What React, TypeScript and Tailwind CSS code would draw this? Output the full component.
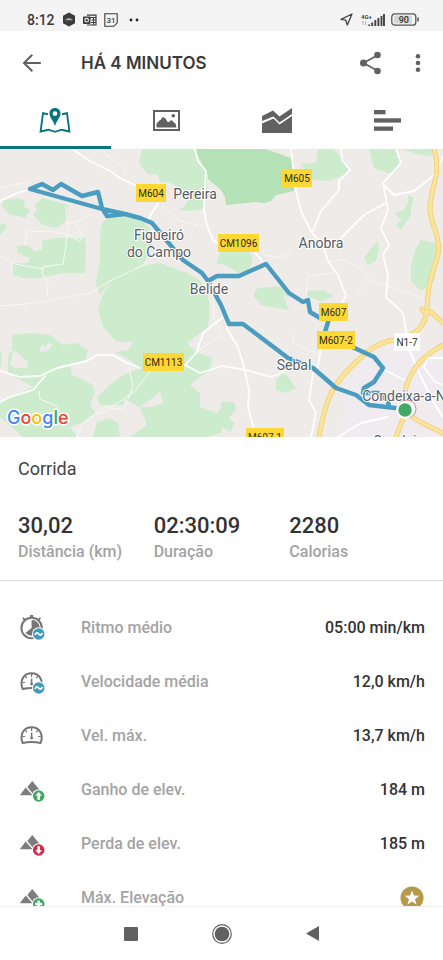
import type { ReactNode } from 'react';

const FOREST = '#b5e1b6';
const GREEN = '#cdecce';
const LAND = '#eeebe8';

const greens = [
  '142,0 139,14 147,25 158,26 160,33 171,34 183,41 190,47 185,57 179,61 190,62 203,60 206,52 207,33 207,20 196,5 193,0',
  '318,0 316,14 301,15 312,31 328,32 344,26 349,21 344,11 333,0',
  '369,0 374,19 388,24 394,24 399,14 398,0',
  '401,0 421,6 432,7 432,0',
  '408,46 414,49 411,59 411,66 404,76 401,81 396,76 401,71 394,64 404,61 408,54',
  '421,91 438,94 439,109 434,132 421,142 411,132 411,116 416,99',
  '378,92 379,99 376,112 368,116 364,109 371,99',
  '221,101 248,102 253,109 249,121 238,124 228,117 216,114',
  '254,144 258,139 284,137 289,148 283,146 289,161 271,158 261,156 254,148',
  '308,142 324,141 333,147 321,153 306,146',
  '284,223 289,229 296,239 286,244 276,241 276,231',
  '221,253 234,253 236,261 229,269 234,274 231,283 221,278',
  '102,74 110,66 127,67 140,71 150,79 152,97 143,116 127,124 110,132 100,146 97,139 96,132 100,112 100,86',
  '102,148 110,132 127,124 147,116 160,114 187,124 200,131 208,146 210,161 208,178 187,194 197,204 212,208 210,221 190,236 200,244 200,258 217,264 222,258 222,284 206,288 130,288 147,276 140,258 153,258 163,254 160,243 140,258 124,250 124,256 100,256 97,248 107,238 123,226 140,219 127,209 115,203 128,201 133,193 117,193 103,178 98,161',
  '3,51 17,49 25,52 24,57 30,61 25,69 17,67 10,66 2,57',
  '35,56 42,49 50,51 68,56 68,69 58,79 43,76 33,66 37,62',
  '0,76 5,74 7,79 0,86',
  '42,92 55,89 85,89 86,99 85,124 63,124 38,129 23,129 13,126 13,114 28,114 30,109 17,104 17,97 27,96 35,102 42,101',
  '12,186 30,184 50,186 63,196 77,194 88,201 85,211 70,216 72,226 80,229 93,236 95,244 90,254 95,264 83,273 70,278 77,288 23,288 0,268 0,253 20,244 33,238 17,229 8,223 8,208 12,201',
  '97,273 110,269 118,274 120,288 93,288',
  '0,199 2,208 0,221',
];

const clearings = [
  '13,201 20,206 28,213 27,219 15,219 10,216',
  '40,198 43,195 46,198 49,193 53,196 47,202 40,203',
];

const roads = [
  'M0 52 17 44 32 40',
  'M72 0 90 12 110 22 120 29 137 37',
  'M195 0 198 12 206 22 205 36 204 62 207 76 213 91 220 96',
  'M158 54 148 71',
  'M0 222 20 228 40 227 57 219 87 212 97 206 113 206 125 213 140 219',
  'M45 227 33 241 10 248 0 253',
  'M222 169 203 184 197 203 185 216 200 224 222 217 246 221 271 228 284 223',
  'M226 178 238 198 244 218 249 241 248 258 254 280',
  'M291 0 296 42 301 62 311 82 324 99 328 112 338 126 346 147 334 168',
  'M341 0 342 11 350 21 339 32 339 41 321 62 313 82',
  'M396 0 401 14 383 34 388 61 381 79 389 96 383 106 388 126 386 149 389 151 403 164 409 201 421 228 434 254 443 268',
  'M384 36 394 46 414 42 433 27 443 8',
  'M386 54 364 66 341 89',
  'M254 102 262 112',
  'M381 219 404 231',
  'M338 288 361 274 388 268',
  'M313 224 309 251 316 264 311 288',
  'M318 218 321 198 324 184',
  'M443 209 428 209 424 218 434 232 443 236',
];

const lanes = [
  'M0 39 13 36 30 33',
  'M100 0 127 22 123 27',
  'M162 57 180 72 203 77',
  'M66 57 68 75 78 72 90 65',
  'M26 96 26 83 50 82 68 86 80 92 82 86 78 78',
  'M68 75 66 96 63 115 43 118 42 124 48 135 47 147',
  'M0 108 15 115 43 120',
  'M0 157 25 155 48 152 90 144 110 132 127 124 147 114',
  'M128 215 133 237 124 260 110 260 95 265 82 275 77 288',
  'M152 220 135 242 115 256 100 260',
  'M39 242 40 250 58 258',
  'M264 106 281 109 291 102',
  'M329 112 344 111 361 119 371 132 354 146',
  'M306 147 308 127 334 124',
  'M371 131 401 142 421 148',
  'M294 183 293 194 305 199 318 205',
  'M213 150 214 170 222 184',
  'M197 203 212 192 222 187',
];

const highways = [
  'M434 0C437 12 438 18 435 32C428 58 429 64 434 78C440 95 440 102 435 116C430 130 428 138 427 161C425 178 416 187 394 191C376 193 364 205 348 221C330 240 325 254 319 288',
  'M422 160Q424 166 431 163L443 174',
  'M443 196C421 208 410 221 405 242L406 262 396 288',
  'M406 264 422 274 443 284',
];

const route = [
  'M125 65 107 67 102 59 98 43 82 47 61 35 53 41 42 35 30 40 102 60 125 65 140 69 152 74 167 92 183 111 202 124 208 132 221 156 229 175 243 175 288 209 313 219 336 239 356 246 369 256 404 260',
  'M208 132 217 127 239 127 266 115 289 144 303 153 308 151 310 163 320 169 329 170 325 183 330 191 348 196 374 208 383 219 374 233 364 239 363 244 378 244 388 252 389 258',
];

const roadSigns = [
  { x: 136, y: 35, w: 30, text: 'M604' },
  { x: 282, y: 20, w: 30, text: 'M605' },
  { x: 218, y: 85, w: 41, text: 'CM1096' },
  { x: 319, y: 154, w: 29, text: 'M607' },
  { x: 317, y: 182, w: 38, text: 'M607-2' },
  { x: 394, y: 184, w: 26, text: 'N1-7', plain: true },
  { x: 143, y: 204, w: 41, text: 'CM1113' },
  { x: 246, y: 279, w: 38, text: 'M607-1' },
];

const towns = [
  { x: 195, y: 50, text: 'Pereira' },
  { x: 159, y: 91, text: 'Figueiró' },
  { x: 159, y: 108, text: 'do Campo' },
  { x: 209, y: 145, text: 'Belide' },
  { x: 321, y: 99, text: 'Anobra' },
  { x: 294, y: 221, text: 'Sebal' },
  { x: 415, y: 252, text: 'Condeixa-a-Nova' },
  { x: 402, y: 297, text: 'Condeixa' },
];

function RouteMap() {
  return (
    <svg
      viewBox="0 0 443 288"
      preserveAspectRatio="xMidYMid slice"
      className="block h-72 w-full shrink-0"
      role="img"
      aria-label="Mapa do percurso"
      fontFamily="Roboto, sans-serif"
    >
      <rect width="443" height="288" fill={LAND} />
      <path d="M345 235 372 200 394 195 425 200 443 205V288H340Z" fill="#efebef" />
      {greens.map((points) => (
        <polygon key={points} points={points} fill={GREEN} />
      ))}
      <polygon
        points="194,0 207,23 208,30 221,41 225,48 226,56 256,53 264,54 271,52 276,46 294,42 293,19 291,9 280,5 271,2 265,0"
        fill={FOREST}
      />
      {clearings.map((points) => (
        <polygon key={points} points={points} fill={LAND} />
      ))}
      <g fill="none" strokeLinejoin="round" strokeLinecap="round">
        {lanes.map((d) => (
          <path key={d} d={d} stroke="#f9f8f6" strokeWidth="1" />
        ))}
        {roads.map((d) => (
          <path key={d} d={d} stroke="#fff" strokeWidth="1.8" />
        ))}
        {highways.map((d) => (
          <path key={d} d={d} stroke="#efcf73" strokeWidth="5" />
        ))}
        {highways.map((d) => (
          <path key={d} d={d} stroke="#fce39a" strokeWidth="3.4" />
        ))}
        {route.map((d) => (
          <path key={d} d={d} stroke="#4a9cc0" strokeWidth="4.4" />
        ))}
      </g>
      {roadSigns.map((sign) => (
        <g key={sign.text}>
          <rect x={sign.x} y={sign.y} width={sign.w} height="18" fill={sign.plain ? '#fff' : '#fcd834'} />
          <text x={sign.x + sign.w / 2} y={sign.y + 13} fontSize="10" textAnchor="middle" fill="#2f2c20">
            {sign.text}
          </text>
        </g>
      ))}
      <g fontSize="14" textAnchor="middle" fill="#565c66" stroke="#fff" strokeWidth="2" strokeLinejoin="round" paintOrder="stroke">
        {towns.map((town) => (
          <text key={town.text} x={town.x} y={town.y}>
            {town.text}
          </text>
        ))}
      </g>
      <circle cx="407" cy="260" r="9" fill="#fff" stroke="#c98f8f" strokeWidth="1" />
      <circle cx="405" cy="261" r="9" fill="#fff" />
      <circle cx="405" cy="261" r="6.7" fill="#42a862" />
      <text
        x="7"
        y="275"
        fontSize="18"
        fontWeight="500"
        fontFamily="Inter, sans-serif"
        stroke="#fff"
        strokeWidth="3"
        strokeLinejoin="round"
        paintOrder="stroke"
      >
        <tspan fill="#4285f4">G</tspan>
        <tspan fill="#ea4335">o</tspan>
        <tspan fill="#fbbc05">o</tspan>
        <tspan fill="#4285f4">g</tspan>
        <tspan fill="#34a853">l</tspan>
        <tspan fill="#ea4335">e</tspan>
      </text>
    </svg>
  );
}

function StatusBar() {
  return (
    <div className="flex h-[31px] shrink-0 items-center justify-between bg-[#f4f4f4] pr-6 pl-[27px] pt-2 text-[#3c3c3c]">
      <div className="flex items-center gap-[7px]">
        <span className="text-[14px] leading-4 font-medium">8:12</span>
        <svg className="h-[15px] w-[14px]" viewBox="0 0 14 15">
          <path d="M7 .5 13 3.8V11.2L7 14.5 1 11.2V3.8Z" fill="#3c3c3c" />
          <path d="M3 8.3C4 6.8 5.5 6.2 7 6.2S10 6.8 11 8.3Z" fill="#aaa" />
        </svg>
        <svg className="h-3 w-[14px]" viewBox="0 0 14 12">
          <path d="M4 1.2H13V11H4" fill="none" stroke="#3c3c3c" strokeWidth="1.2" />
          <path d="M4 3.5H13M8.5 6H13M10.5 3V11M8 8.5H13" stroke="#3c3c3c" strokeWidth="1" />
          <rect x="0" y="2.5" width="7.5" height="7.5" rx=".8" fill="#3c3c3c" />
          <circle cx="3.7" cy="6.2" r="1.8" fill="none" stroke="#f4f4f4" strokeWidth="1.1" />
        </svg>
        <svg className="h-[14px] w-[14px]" viewBox="0 0 14 14" fontFamily="Roboto, sans-serif">
          <path d="M.8 .7H13.2V9.8L9.8 13.3H.8Z" fill="none" stroke="#3c3c3c" strokeWidth="1.1" />
          <text x="7" y="10" fontSize="8" fontWeight="500" textAnchor="middle" fill="#3c3c3c">31</text>
        </svg>
        <svg className="ml-1 h-1 w-3" viewBox="0 0 12 4">
          <circle cx="2" cy="2" r="1.4" fill="#222" />
          <circle cx="8" cy="2" r="1.4" fill="#222" />
        </svg>
      </div>
      <div className="flex items-center">
        <svg className="mr-2 h-[13px] w-[13px]" viewBox="0 0 13 13">
          <path d="M12 1 1 6.3 5.8 7.2 7.3 12Z" fill="none" stroke="#444" strokeWidth="1.3" strokeLinejoin="round" />
        </svg>
        <svg className="mr-[6px] h-[14px] w-6" viewBox="0 0 24 14" fontFamily="Roboto, sans-serif">
          <text x="0" y="5.5" fontSize="6" fontWeight="700" fill="#444">4G+</text>
          <path d="M2 8V12M1 9 2 8M4.5 8V12M5.5 11 4.5 12" stroke="#aaa" strokeWidth=".8" fill="none" />
          <path d="M8.2 13V11.5M11.2 13V9.5M14.3 13V7M17.4 13V5M20.5 13V3M23 13V1" stroke="#444" strokeWidth="1.9" />
        </svg>
        <svg className="h-[13px] w-7" viewBox="0 0 28 13" fontFamily="Roboto, sans-serif">
          <rect x="3" y="2.5" width="18" height="8" rx="1" fill="#d6d6d6" />
          <rect x=".8" y=".8" width="24" height="11.4" rx="3" fill="none" stroke="#555" strokeWidth="1.3" />
          <path d="M27 4.5V8.5" stroke="#555" strokeWidth="1.5" />
          <text x="12.8" y="9.8" fontSize="9" fontWeight="500" textAnchor="middle" fill="#333">90</text>
        </svg>
      </div>
    </div>
  );
}

function Header() {
  return (
    <header className="flex h-16 shrink-0 items-center pr-[15px] pl-5">
      <button type="button" aria-label="Voltar" className="mr-10 flex h-6 w-[21px] items-center">
        <svg className="h-5 w-[21px]" viewBox="0 0 21 20" fill="none" stroke="#616161" strokeWidth="2">
          <path d="M20.8 10H4M12.3 1.8 4 10 12.3 18.2" />
        </svg>
      </button>
      <h1 className="font-[Inter,sans-serif] text-[17px] leading-6 font-semibold text-[#3a3a3a]">HÁ 4 MINUTOS</h1>
      <button type="button" aria-label="Partilhar" className="ml-auto">
        <svg className="h-6 w-6" viewBox="0 0 24 24" fill="#616161">
          <path d="M4.5 12 19 4M4.5 12 19 20" stroke="#616161" strokeWidth="1.8" />
          <circle cx="4.5" cy="12" r="3.5" />
          <circle cx="18.5" cy="4" r="3.3" />
          <circle cx="18.500" cy="20" r="3.3" />
        </svg>
      </button>
      <button type="button" aria-label="Mais opções" className="ml-[25px] flex w-5 justify-center">
        <svg className="h-5 w-1.5" viewBox="0 0 6 20" fill="#616161">
          <circle cx="3" cy="3.3" r="2.3" />
          <circle cx="3" cy="10" r="2.3" />
          <circle cx="3" cy="16.7" r="2.3" />
        </svg>
      </button>
    </header>
  );
}

const tabs: { label: string; icon: ReactNode }[] = [
  {
    label: 'Mapa',
    icon: (
      <svg className="h-[26px] w-8" viewBox="0 0 32 26">
        <path
          d="M9 6.3 4 5.2 1.6 23.5 9.5 21.7 16 23.8 22.5 21.7 30.4 23.5 28 5.2 23 6.3"
          fill="none"
          stroke="#0b747c"
          strokeWidth="1.9"
        />
        <path
          fillRule="evenodd"
          d="M16 0C12.7 0 10.5 2.4 10.5 5.4C10.5 9.4 14.5 12.5 16 18C17.5 12.5 21.5 9.4 21.5 5.4C21.5 2.4 19.3 0 16 0ZM16 3.2A2.4 2.4 0 1 1 16 8A2.4 2.4 0 1 1 16 3.2Z"
          fill="#0b747c"
        />
      </svg>
    ),
  },
  {
    label: 'Fotos',
    icon: (
      <svg className="h-[21px] w-[27px]" viewBox="0 0 27 21">
        <rect x="1" y="1" width="25" height="19" fill="none" stroke="#616161" strokeWidth="2" />
        <path d="M3.5 17.5V13.5L6.5 10.5 8 9.5 9.5 7 11 7.5 12.5 8.5 15 12.5 18.5 10 21 12.500 22.5 13.5 23.5 17.5Z" fill="#616161" />
        <circle cx="20.3" cy="5.8" r="1.8" fill="#616161" />
      </svg>
    ),
  },
  {
    label: 'Gráficos',
    icon: (
      <svg className="h-[25px] w-[30px]" viewBox="0 0 30 25" fill="#616161">
        <path d="M0 8 11 2.5 17.5 8.5 30 0V6L17.5 14.5 11.5 8.5 0 13Z" />
        <path d="M0 15.5 11.5 10.5 17.5 16.500 30 8V25H0Z" />
      </svg>
    ),
  },
  {
    label: 'Detalhes',
    icon: (
      <svg className="h-[21px] w-[27px]" viewBox="0 0 27 21" fill="#616161">
        <rect width="11.5" height="4.3" />
        <rect y="8.3" width="27" height="4.3" />
        <rect y="16.5" width="19" height="4.3" />
      </svg>
    ),
  },
];

function TabBar() {
  return (
    <nav className="grid h-[54px] shrink-0 grid-cols-4">
      {tabs.map((tab, index) => (
        <button
          key={tab.label}
          type="button"
          aria-label={tab.label}
          className={
            index === 0
              ? 'flex items-center justify-center border-b-[3px] border-[#0b747c]'
              : 'flex items-center justify-center border-b-[3px] border-transparent'
          }
        >
          {tab.icon}
        </button>
      ))}
    </nav>
  );
}

const summary = [
  { value: '30,02', label: 'Distância (km)' },
  { value: '02:30:09', label: 'Duração' },
  { value: '2280', label: 'Calorias' },
];

function Summary() {
  return (
    <section className="border-b border-[#dcdcdc] px-[18px] pt-5 pb-4">
      <h2 className="text-[18px] leading-6 text-[#444]">Corrida</h2>
      <dl className="mt-[31px] grid grid-cols-3">
        {summary.map((item) => (
          <div key={item.label} className="flex flex-col-reverse">
            <dt className="text-[16px] leading-6 font-medium text-[#a3a3a3]">{item.label}</dt>
            <dd className="text-[22px] leading-7 font-medium text-[#333]">{item.value}</dd>
          </div>
        ))}
      </dl>
    </section>
  );
}

function Wave() {
  return (
    <>
      <circle cx="18.7" cy="19" r="6.8" fill="#fff" />
      <circle cx="18.7" cy="19" r="5.8" fill="#4299be" />
      <path d="M15 20C16.2 17.3 17.6 17.6 18.7 19S21.3 20.6 22.4 18" fill="none" stroke="#fff" strokeWidth="1.8" />
    </>
  );
}

function Gauge({ children }: { children?: ReactNode }) {
  return (
    <svg className="h-[26px] w-[26px]" viewBox="0 0 26 26">
      <path
        d="M2.6 20C-.6 12 3.5 4.2 11.6 4.2S23.8 12 20.6 20C14.5 18.5 8.7 18.5 2.6 20Z"
        fill="none"
        stroke="#757575"
        strokeWidth="2"
        strokeLinejoin="round"
      />
      <path d="M11.6 5V8M5.5 7.5 7 9M17.7 7.5 16.2 9M2.5 13.5H5M20.7 13.5H18.2" stroke="#757575" strokeWidth="1.2" />
      <path d="M11.6 9.5V15.5" stroke="#757575" strokeWidth="1.5" />
      <circle cx="11.6" cy="15" r="1.4" fill="#757575" />
      {children}
    </svg>
  );
}

function PaceIcon() {
  return (
    <svg className="h-[26px] w-[26px]" viewBox="0 0 26 26">
      <circle cx="11.6" cy="13" r="10.2" fill="none" stroke="#757575" strokeWidth="2" />
      <path d="M10 1H13.2M11.6 1V3M2.8 2.8 5 5M20.4 2.8 18.2 5" stroke="#757575" strokeWidth="1.8" />
      <path d="M11.6 13V5A8 8 0 0 1 17.5 18.5L14 20.5Q9 21.5 5.5 18Z" fill="#757575" />
      <Wave />
    </svg>
  );
}

function ElevationIcon({ color, badge }: { color: string; badge: string }) {
  return (
    <svg className="h-[26px] w-[26px]" viewBox="0 0 26 26">
      <path d="M-.2 18.3 5.7 10.5 12.5 18.3ZM7.3 10 12.3 4 20.5 14V18.3H14Z" fill="#7d7d7d" />
      <circle cx="18.7" cy="19" r="6.8" fill="#fff" />
      <circle cx="18.7" cy="19" r="5.8" fill={color} />
      <path d={badge} fill="#fff" />
    </svg>
  );
}

const UP = 'M18.7 15 22 18.8H20V22.8H17.4V18.8H15.4Z';
const DOWN = 'M18.7 23 22 19.2H20V15.2H17.4V19.2H15.4Z';
const PLUS = 'M17.5 15.5H19.9V17.8H22.2V20.2H19.9V22.5H17.5V20.2H15.2V17.8H17.5Z';

const details: { label: string; value: ReactNode; icon: ReactNode }[] = [
  { label: 'Ritmo médio', value: '05:00 min/km', icon: <PaceIcon /> },
  { label: 'Velocidade média', value: '12,0 km/h', icon: <Gauge><Wave /></Gauge> },
  { label: 'Vel. máx.', value: '13,7 km/h', icon: <Gauge /> },
  { label: 'Ganho de elev.', value: '184 m', icon: <ElevationIcon color="#43a865" badge={UP} /> },
  { label: 'Perda de elev.', value: '185 m', icon: <ElevationIcon color="#cf2f4f" badge={DOWN} /> },
  {
    label: 'Máx. Elevação',
    value: (
      <svg className="mr-px h-6 w-6" viewBox="0 0 24 24" role="img" aria-label="Premium">
        <circle cx="12" cy="12" r="11.5" fill="#b7994a" />
        <path d="M12 4.5 13.9 9.6 19.3 9.8 15 13.2 16.5 18.4 12 15.4 7.5 18.4 9 13.2 4.7 9.8 10.1 9.6Z" fill="#fff" />
      </svg>
    ),
    icon: <ElevationIcon color="#43a865" badge={PLUS} />,
  },
];

function Details() {
  return (
    <ul className="pt-5">
      {details.map((row) => (
        <li key={row.label} className="flex h-[54px] items-center pr-[18px] pl-5">
          {row.icon}
          <span className="ml-[35px] text-[16px] leading-6 font-medium text-[#a3a3a3]">{row.label}</span>
          <span className="ml-auto text-[16px] leading-6 font-medium text-[#333]">{row.value}</span>
        </li>
      ))}
    </ul>
  );
}

function SystemNav() {
  return (
    <footer className="flex h-[54px] shrink-0 items-center justify-center gap-[74px] border-t border-[#efefef] bg-white">
      <button type="button" aria-label="Recentes">
        <svg className="h-[14px] w-[14px]" viewBox="0 0 14 14">
          <rect width="14" height="14" rx="1" fill="#616161" />
        </svg>
      </button>
      <button type="button" aria-label="Início">
        <svg className="h-5 w-5" viewBox="0 0 20 20">
          <circle cx="10" cy="10" r="9.3" fill="none" stroke="#616161" strokeWidth="1.2" />
          <circle cx="10" cy="10" r="7.3" fill="#616161" />
        </svg>
      </button>
      <button type="button" aria-label="Retroceder">
        <svg className="h-[15px] w-[14px]" viewBox="0 0 14 15">
          <path d="M0 7.5 13 0V15Z" fill="#616161" />
        </svg>
      </button>
    </footer>
  );
}

export default function App() {
  return (
    <div className="flex h-screen flex-col bg-white font-[Roboto,sans-serif]">
      <StatusBar />
      <Header />
      <TabBar />
      <main className="min-h-0 flex-1 overflow-y-auto [scrollbar-width:none]">
        <RouteMap />
        <Summary />
        <Details />
      </main>
      <SystemNav />
    </div>
  );
}
